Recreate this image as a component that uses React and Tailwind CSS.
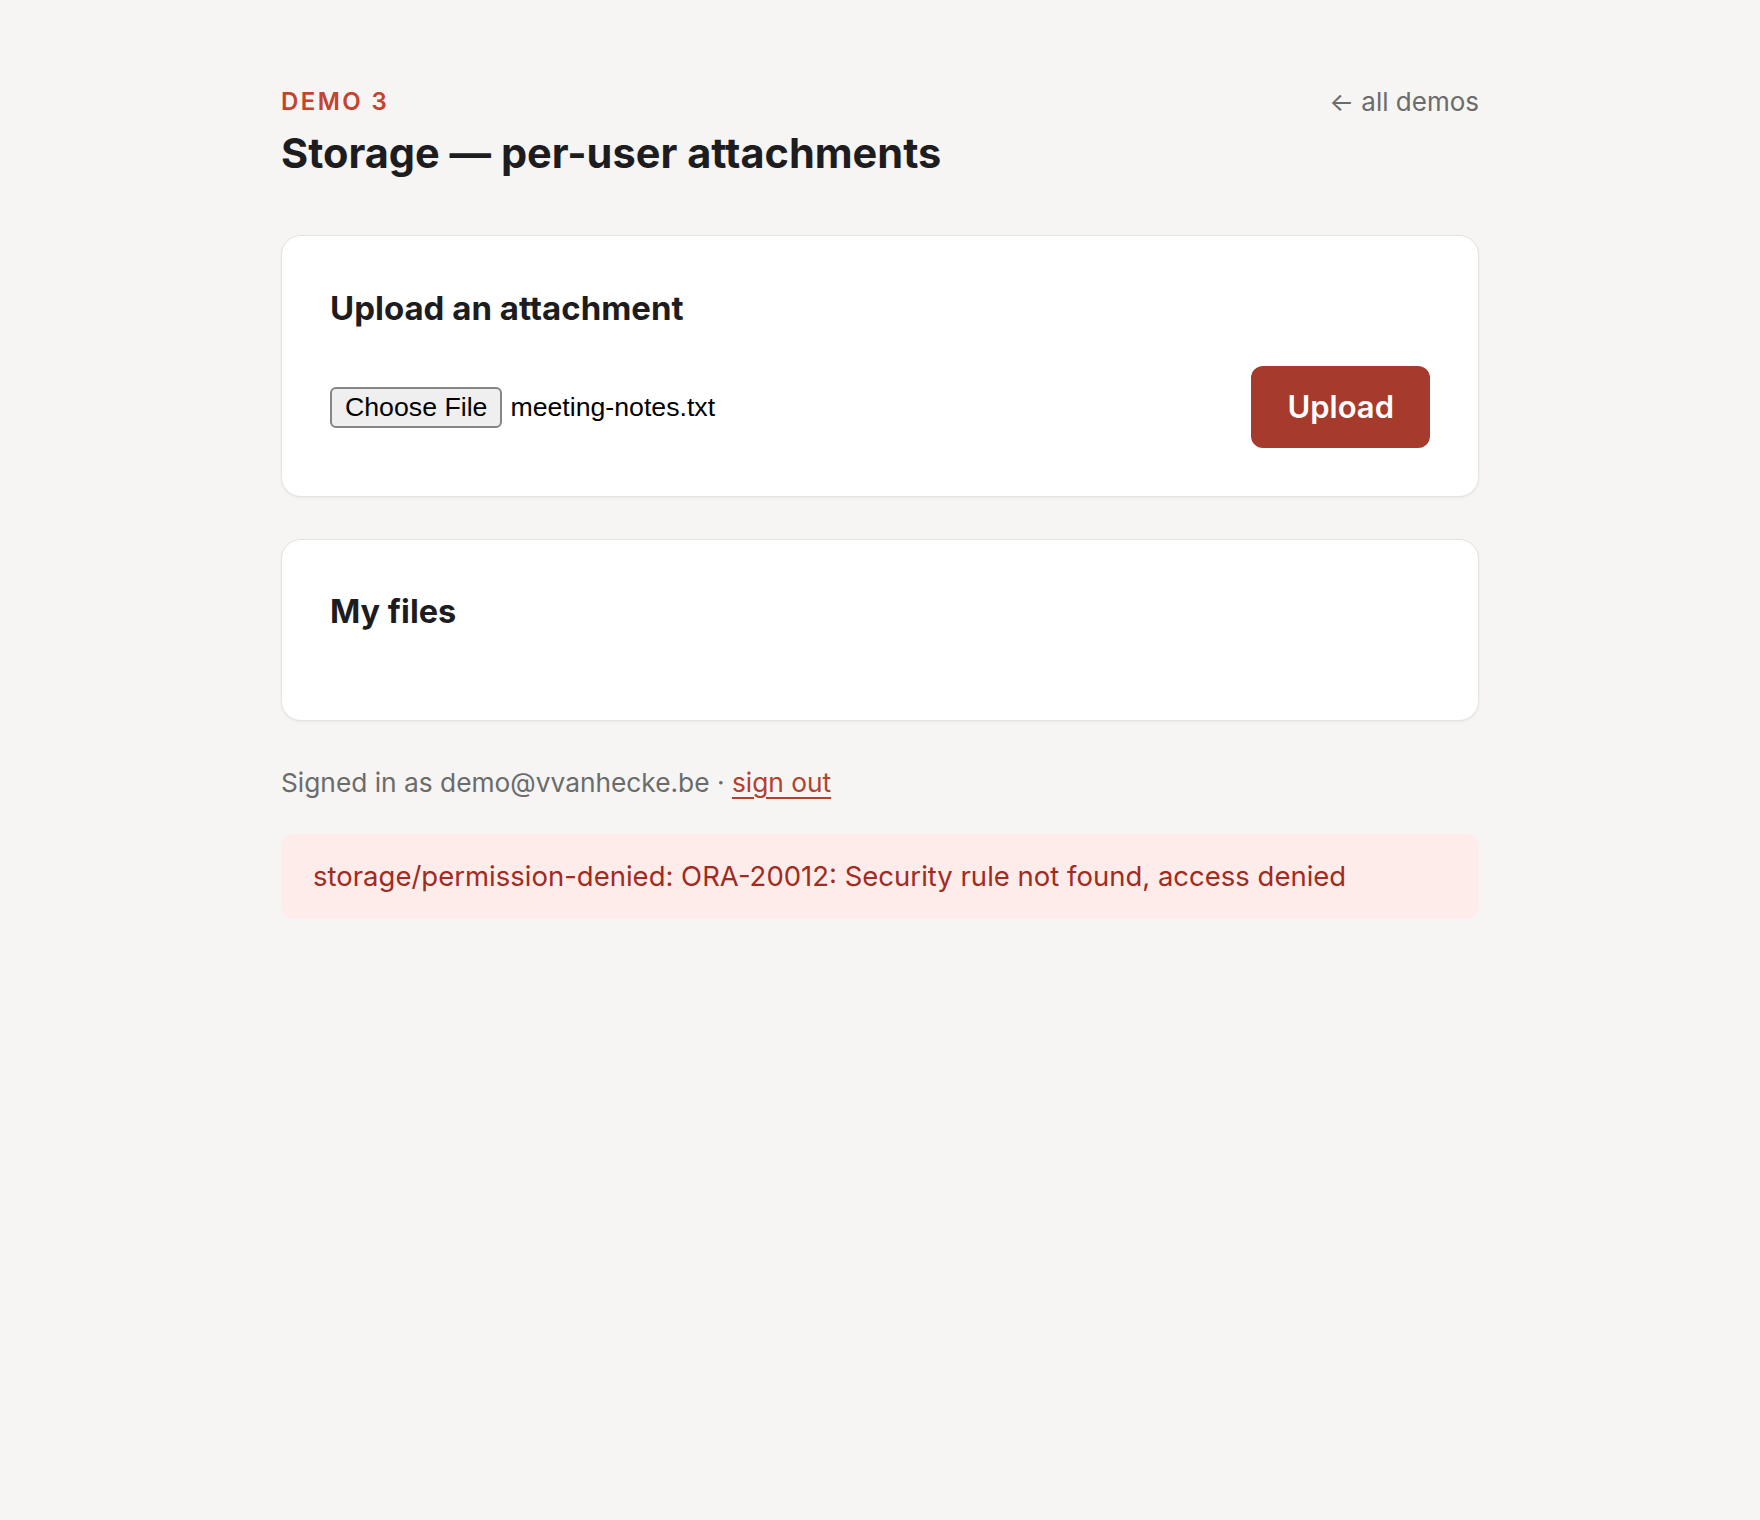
export default function App() {
  return (
    <div className="min-h-screen bg-[#f6f5f3] font-['Inter',sans-serif] text-[#1d1d1f]">
      <div className="w-[1198px] mx-auto pt-[84px] pb-[80px]">
        <header className="flex justify-between items-start">
          <div>
            <div className="text-[24px] leading-[36px] font-semibold tracking-[0.1em] text-[#c4432f]">DEMO 3</div>
            <h1 className="mt-[9px] text-[41.5px] leading-[48px] font-bold text-[#1d1d1f]">
              Storage — per-user attachments
            </h1>
          </div>
          <a href="#" className="text-[26px] leading-[36px] text-[#6b6b6b] no-underline">
            ← all demos
          </a>
        </header>

        <section className="mt-[58px] bg-white border border-[#e6e4e0] rounded-[20px] shadow-[0_1px_3px_rgba(0,0,0,0.05)] px-[48px] py-[48px]">
          <h2 className="text-[33px] leading-[48px] font-bold mb-[34px]">Upload an attachment</h2>
          <div className="flex items-center justify-between">
            <div className="flex items-center font-['Liberation_Sans',Arial,sans-serif] text-[26.7px] text-black">
              <span className="h-[41px] px-[13px] flex items-center border-2 border-[#858585] rounded-[6px] bg-[#efefef] leading-none">
                Choose File
              </span>
              <span className="ml-[8px]">meeting-notes.txt</span>
            </div>
            <button className="h-[82px] px-[36px] rounded-[12px] bg-[#a63a2c] text-white text-[31px] font-semibold">
              Upload
            </button>
          </div>
        </section>

        <section className="mt-[42px] bg-white border border-[#e6e4e0] rounded-[20px] shadow-[0_1px_3px_rgba(0,0,0,0.05)] px-[48px] py-[48px]">
          <h2 className="text-[32.5px] leading-[48px] font-bold mb-[36px]">My files</h2>
          <ul></ul>
        </section>

        <p className="mt-[42px] text-[26.3px] leading-[39px] text-[#6b6b6b]">
          Signed in as demo@vvanhecke.be ·{" "}
          <a href="#" className="text-[#b4402e] underline underline-offset-[5px]">sign out</a>
        </p>

        <div className="mt-[32px] rounded-[14px] bg-[#fdecea] px-[32px] py-[21px] text-[27.5px] leading-[43px] text-[#a32a1e]">
          storage/permission-denied: ORA-20012: Security rule not found, access denied
        </div>
      </div>
    </div>
  );
}
